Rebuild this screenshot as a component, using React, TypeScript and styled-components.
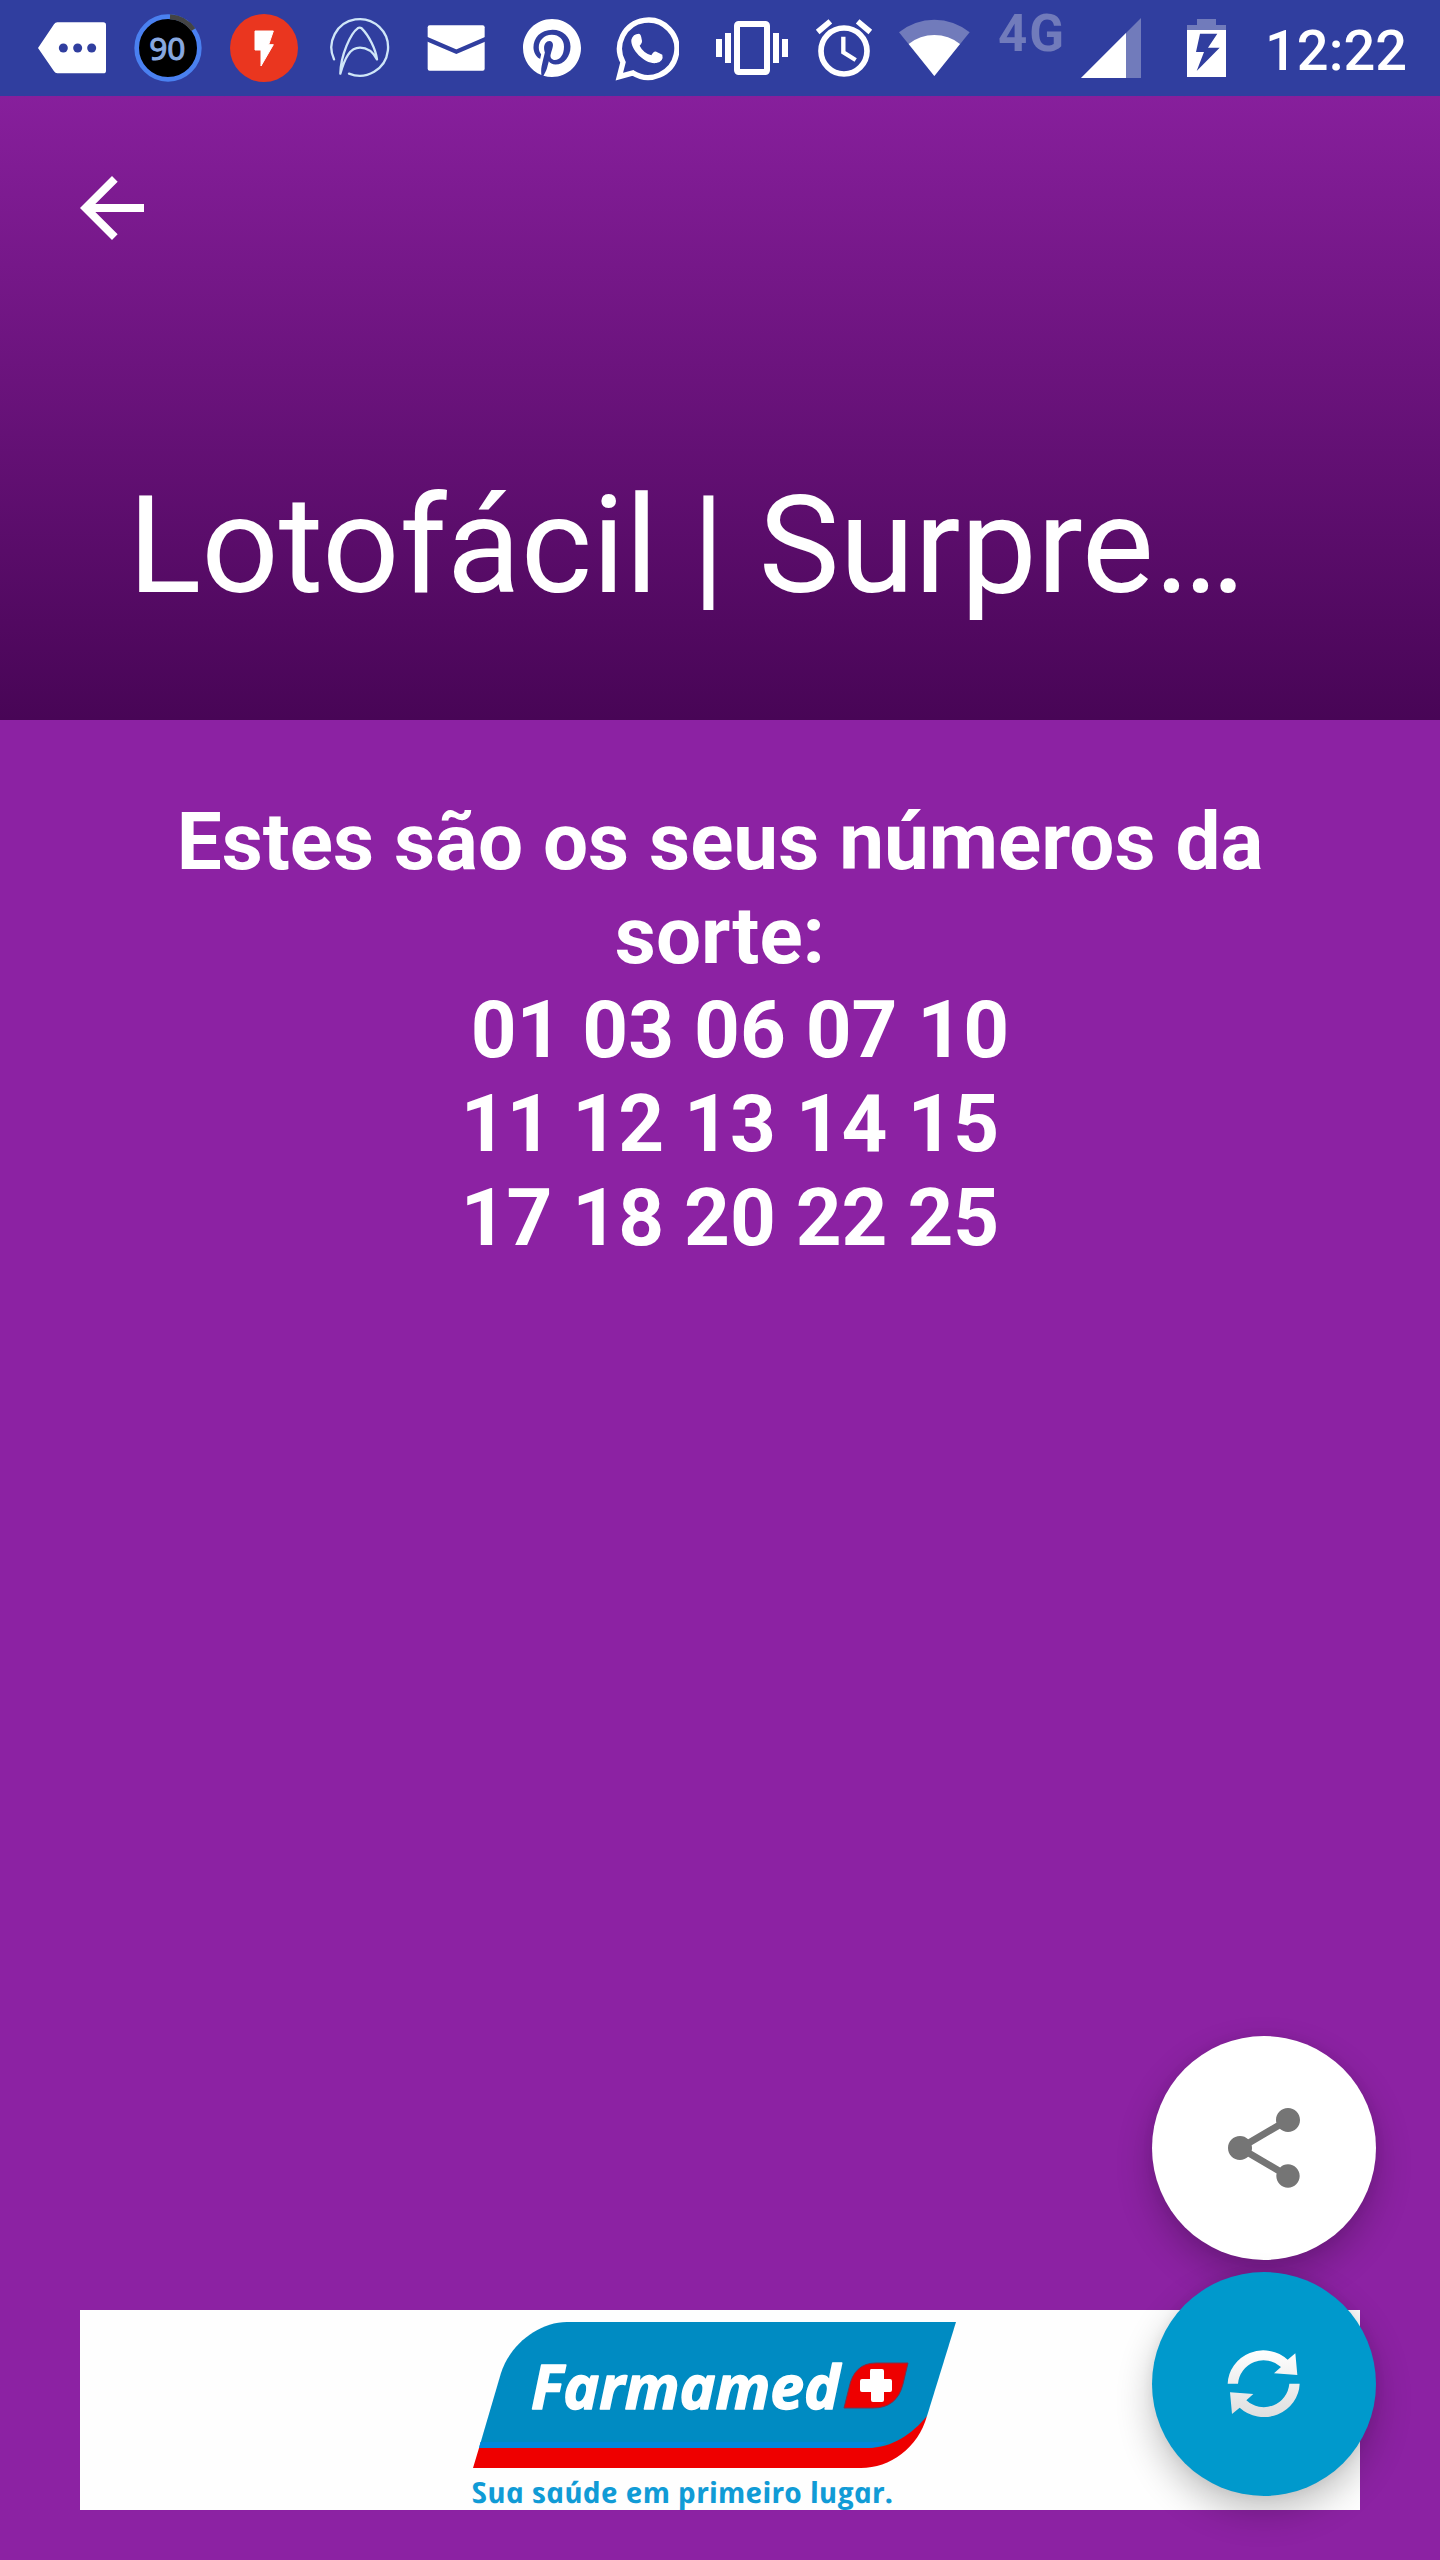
import React from 'react';
import styled, { createGlobalStyle } from 'styled-components';
import { FaPinterest } from 'react-icons/fa';

const BAR = '#303e9f';
const PALE = '#717bbb';

const GlobalStyle = createGlobalStyle`
  html, body { margin: 0; padding: 0; background: #8c22a3; }
  * { box-sizing: border-box; }
`;

const Screen = styled.div`
  position: relative;
  display: flex;
  flex-direction: column;
  width: 1440px;
  height: 2560px;
  overflow: hidden;
  background: #8c22a3;
  color: #fff;
  font-family: Roboto, 'Liberation Sans', sans-serif;
`;

const StatusBar = styled.header`
  display: flex;
  flex: none;
  align-items: flex-start;
  height: 96px;
  background: ${BAR};
`;

const StatusIcon = styled.svg<{ $w: number; $gap: number }>`
  display: block;
  flex: none;
  width: ${(p) => p.$w}px;
  height: 96px;
  margin-left: ${(p) => p.$gap}px;
`;

const Pin = styled(FaPinterest)`
  flex: none;
  width: 58px;
  height: 60px;
  margin: 18px 0 0 38px;
`;

const Network = styled.span`
  flex: none;
  width: 70px;
  margin: 4px 0 0 28px;
  font-size: 51px;
  font-weight: 700;
  line-height: 60px;
  letter-spacing: 2px;
  color: ${PALE};
`;

const Clock = styled.time`
  flex: none;
  margin: 18px 0 0 38px;
  font-size: 56px;
  font-weight: 500;
  line-height: 66px;
  white-space: nowrap;
`;

const AppBar = styled.section`
  display: flex;
  flex: none;
  flex-direction: column;
  justify-content: space-between;
  height: 624px;
  padding: 64px 64px 94px;
  background: linear-gradient(#871f9c, #480556);
`;

const BackButton = styled.button`
  width: 96px;
  height: 96px;
  padding: 0;
  border: 0;
  background: none;
  color: #fff;
`;

const Title = styled.h1`
  margin: 0 0 0 64px;
  font-size: 136px;
  font-weight: 400;
  line-height: 160px;
  white-space: nowrap;
`;

const Content = styled.main`
  flex: 1;
  padding: 75px 80px 0;
`;

const Message = styled.p`
  margin: 0 auto;
  font-size: 80px;
  font-weight: 700;
  line-height: 94px;
  text-align: center;
`;

const Line = styled.span`
  display: block;
  white-space: pre;
`;

const Banner = styled.aside`
  display: flex;
  flex: none;
  justify-content: flex-start;
  width: 1280px;
  height: 200px;
  margin: 0 auto 50px;
  padding-left: 380px;
  overflow: hidden;
  background: #fefefe;
`;

const Fab = styled.button<{ $top: number; $color: string }>`
  position: absolute;
  top: ${(p) => p.$top}px;
  right: 64px;
  display: flex;
  align-items: center;
  justify-content: center;
  width: 224px;
  height: 224px;
  padding: 0;
  border: 0;
  border-radius: 50%;
  background: ${(p) => p.$color};
  box-shadow: 0 16px 36px rgba(0, 0, 0, 0.24), 0 0 12px rgba(0, 0, 0, 0.06);
`;

type IconProps = { x: number; w: number; gap: number; children: React.ReactNode };

// Status glyphs are drawn on a grid of three units per pixel.
const Glyph = ({ x, w, gap, children }: IconProps) => (
  <StatusIcon $w={w} $gap={gap} viewBox={`${x} 0 ${w * 3} 288`} fill="#fff">
    {children}
  </StatusIcon>
);

const Status = () => (
  <StatusBar>
    <Glyph x={114} w={68} gap={38}>
      <path d="M172 67H310q8 0 8 8V212q0 8-8 8H172q-6 0-10-6L114 144 162 73q4-6 10-6z" />
      <g fill={BAR}>
        <circle cx="190" cy="144" r="13.5" />
        <circle cx="233" cy="144" r="13.5" />
        <circle cx="275" cy="144" r="13.5" />
      </g>
    </Glyph>
    <Glyph x={402} w={68} gap={28}>
      <circle cx="504" cy="144" r="94" fill="#000" stroke="#4a80f0" strokeWidth="14" />
      <path d="M510 50A94 94 0 0 1 580 89" fill="none" stroke="#444" strokeWidth="15" />
      <text x="502" y="181" fontSize="95" textAnchor="middle" fill="#88a8e0" stroke="#88a8e0" strokeWidth="3" fontFamily="'Noto Sans', sans-serif">90</text>
    </Glyph>
    <Glyph x={690} w={68} gap={28}>
      <circle cx="792" cy="144" r="102" fill="#ea361f" />
      <path d="M765 93H820L806 134H820L783 198V150H765z" stroke="#fff" strokeWidth="3" />
    </Glyph>
    <Glyph x={987} w={62} gap={31}>
      <g fill="none" stroke="#cfe6f8" strokeWidth="7" strokeLinejoin="round" strokeLinecap="round">
        <path d="M1002 178A85 85 0 1 1 1047 221" />
        <path d="M1021 221C1022 165 1052 100 1073 85Q1079 81 1085 85C1108 108 1127 148 1131 178C1119 156 1101 143 1080 143C1050 143 1035 172 1021 221z" />
      </g>
    </Glyph>
    <Glyph x={1281} w={58} gap={36}>
      <rect x="1283" y="76" width="171" height="136" rx="6" />
      <path d="M1278 116L1369 155 1460 116" fill="none" stroke={BAR} strokeWidth="13" />
    </Glyph>
    <Pin />
    <Glyph x={408} w={64} gap={34}>
      <path d="M421 230L432 187A86 86 0 1 1 462 219z" fill="none" stroke="#fff" strokeWidth="16" />
      <path d="M480 101Q486 102 488 118Q492 128 482 137Q492 158 517 166Q524 152 532 155L550 164Q555 184 532 189C500 194 454 150 457 119Q462 101 480 101z" />
    </Glyph>
    <Glyph x={708} w={72} gap={37}>
      <path d="M708 117h18v54h-18zM735 99h18v90h-18zM879 99h18v90h-18zM906 117h18v54h-18z" />
      <rect x="771" y="72" width="90" height="144" rx="5" fill="none" stroke="#fff" strokeWidth="18" />
    </Glyph>
    <Glyph x={1005} w={58} gap={27}>
      <g fill="none" stroke="#fff">
        <circle cx="1092" cy="153" r="69" strokeWidth="17" />
        <path d="M1013 96L1051 64M1133 64L1171 96" strokeWidth="17" />
        <path d="M1090 110V157L1127 180" strokeWidth="13" />
      </g>
    </Glyph>
    <Glyph x={1257} w={71} gap={26}>
      <path d="M1363 228L1257 97A168 168 0 0 1 1469 97z" fill={PALE} />
      <path d="M1363 228L1286 132A124 124 0 0 1 1440 132z" />
    </Glyph>
    <Network>4G</Network>
    <Glyph x={363} w={60} gap={13}>
      <path d="M363 234L543 54V234z" fill={PALE} />
      <path d="M363 234L498 99V234z" />
    </Glyph>
    <Glyph x={681} w={40} gap={46}>
      <path d="M711 57h57v18h30v16H681V75h30z" fill={PALE} />
      <path d="M681 90h117v141H681z" />
      <path d="M720 101H772L744 143H779L710 213 732 156H708z" fill={BAR} />
    </Glyph>
    <Clock>12:22</Clock>
  </StatusBar>
);

const Logo = () => (
  <svg width="520" height="200" viewBox="0 0 520 200">
    <path d="M13 158L19 138H408L467 106C458 138 430 158 401 158z" fill="#ee0000" />
    <path d="M19 138L41 63C50 35 78 12 107 12H496L467 106C452 124 432 138 408 138z" fill="#008bc2" />
    <path d="M19 138L20.500 132H427Q418 138 406 138z" fill="#0088dc" />
    <text
      x="71"
      y="99"
      fontFamily="'Open Sans', sans-serif"
      fontStyle="italic"
      fontWeight="700"
      fontSize="61"
      textLength="309"
      lengthAdjust="spacingAndGlyphs"
      fill="#fff"
      stroke="#fff"
      strokeWidth="1.5"
      strokeLinejoin="round"
    >
      Farmamed
    </text>
    <path d="M384 98L389 78Q394 53 416 53H448L443 74Q437 98 413 98z" fill="#ee0000" stroke="#7d3048" strokeWidth="1" />
    <path d="M411 59h11q2 0 2 2v8h6q2 0 2 2v9q0 2-2 2h-6v8q0 2-2 2h-9q-2 0-2-2v-8h-9q-2 0-2-2v-9q0-2 2-2h8v-8q0-2 1-2z" fill="#fff" />
    <text
      transform="translate(13 193) skewX(12)"
      fontFamily="'Open Sans', sans-serif"
      fontStyle="italic"
      fontWeight="700"
      fontSize="29"
      textLength="422"
      lengthAdjust="spacingAndGlyphs"
      fill="#109bd6"
    >
      Sua saúde em primeiro lugar.
    </text>
  </svg>
);

const refreshArrow = 'M53 161A107 104 0 0 1 233 89L256 70 262 135 192 130 213 111A77 77 0 0 0 84 161z';

export default function App() {
  return (
    <>
      <GlobalStyle />
      <Screen>
        <Status />
        <AppBar>
          <BackButton aria-label="Voltar">
            <svg width="96" height="96" viewBox="0 0 24 24" fill="currentColor">
              <path d="M20 11H7.83l5.590-5.590L12 4l-8 8 8 8 1.410-1.410L7.830 13H20v-2z" />
            </svg>
          </BackButton>
          <Title>Lotofácil | Surpre…</Title>
        </AppBar>
        <Content>
          <Message>
            <Line>Estes são os seus números da</Line>
            <Line>sorte:</Line>
            <Line>{'  01 03 06 07 10'}</Line>
            <Line>{' 11 12 13 14 15'}</Line>
            <Line>{' 17 18 20 22 25'}</Line>
          </Message>
        </Content>
        <Banner>
          <Logo />
        </Banner>
        <Fab $top={2036} $color="#fff" aria-label="Compartilhar">
          <svg width="96" height="96" viewBox="0 0 24 24" fill="#757575">
            <path d="M18 16.080c-.76 0-1.440.3-1.960.77L8.910 12.700c.05-.23.09-.46.09-.7s-.04-.47-.09-.7l7.050-4.110c.54.5 1.250.81 2.040.81 1.660 0 3-1.340 3-3s-1.340-3-3-3-3 1.340-3 3c0 .24.04.47.09.7L8.040 9.810C7.500 9.310 6.790 9 6 9c-1.660 0-3 1.340-3 3s1.340 3 3 3c.79 0 1.500-.31 2.040-.81l7.120 4.160c-.05.21-.08.43-.08.65 0 1.610 1.310 2.920 2.920 2.920s2.920-1.310 2.920-2.920-1.310-2.920-2.920-2.920z" />
          </svg>
        </Fab>
        <Fab $top={2272} $color="#0099cc" aria-label="Gerar novamente">
          <svg width="110" height="110" viewBox="-3 -3 330 330">
            <defs>
              <linearGradient id="silver" gradientUnits="userSpaceOnUse" x1="0" y1="55" x2="0" y2="266">
                <stop offset="0" stopColor="#fff" />
                <stop offset="1" stopColor="#dedede" />
              </linearGradient>
              <linearGradient id="silverFlipped" gradientUnits="userSpaceOnUse" x1="0" y1="266" x2="0" y2="55">
                <stop offset="0" stopColor="#fff" />
                <stop offset="1" stopColor="#dedede" />
              </linearGradient>
            </defs>
            <path d={refreshArrow} fill="url(#silver)" />
            <path d={refreshArrow} fill="url(#silverFlipped)" transform="rotate(180 161 161)" />
          </svg>
        </Fab>
      </Screen>
    </>
  );
}
